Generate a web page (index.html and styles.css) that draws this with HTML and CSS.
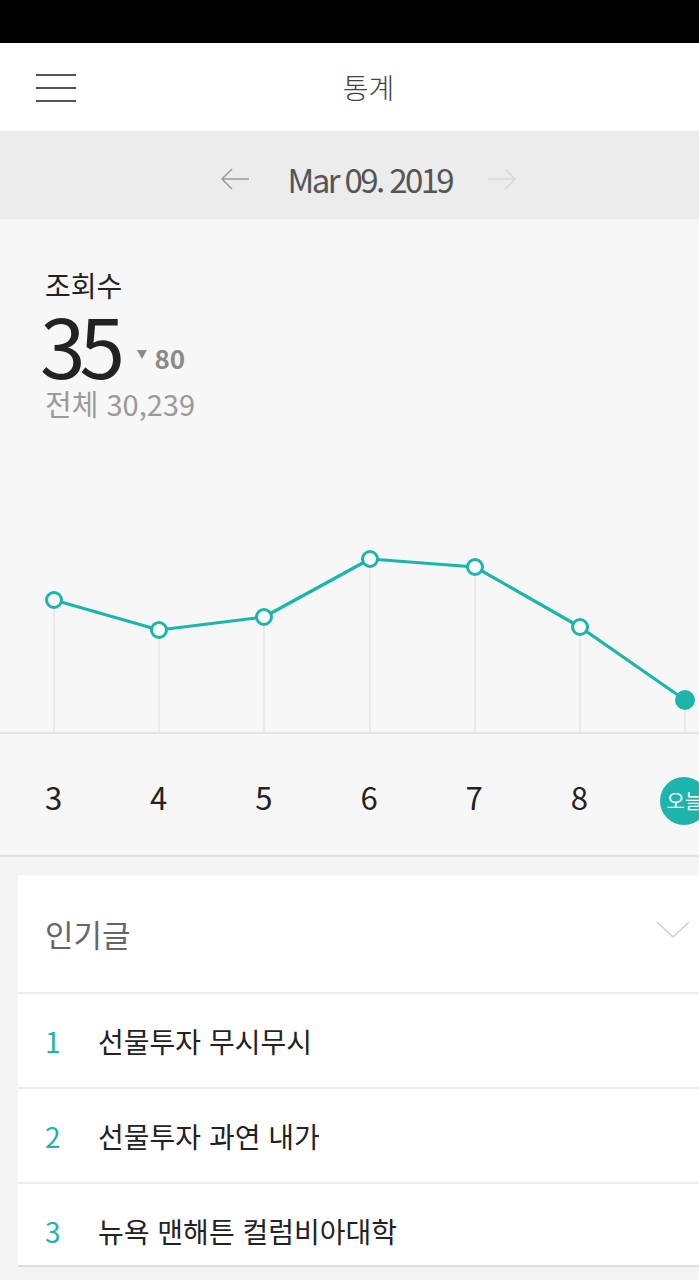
FILE: index.html
```html
<!DOCTYPE html>
<html lang="ko">
<head>
    <meta charset="UTF-8">
    <meta name="viewport" content="width=device-width, initial-scale=1.0">
    <title>통계</title>
    <link rel="stylesheet" href="styles.css">
</head>
<body>
    <div class="status-bar"></div>

    <!-- 상단 헤더 -->
    <header class="top-bar">
        <button class="menu-btn" aria-label="menu">
            <span></span><span></span><span></span>
        </button>
        <h1 class="title">통계</h1>
    </header>

    <!-- 날짜 선택 -->
    <div class="date-bar">
        <svg class="arrow" width="30" height="24" viewBox="0 0 30 24">
            <path d="M29 12H2M12 2L2 12L12 22" fill="none" stroke="#9a9a9a" stroke-width="1.5"/>
        </svg>
        <span class="date">Mar 09. 2019</span>
        <svg class="arrow" width="30" height="24" viewBox="0 0 30 24">
            <path d="M1 12H28M18 2L28 12L18 22" fill="none" stroke="#d6d6d6" stroke-width="1.5"/>
        </svg>
    </div>

    <!-- 조회수 -->
    <section class="stats">
        <div class="stat-label">조회수</div>
        <div class="stat-main">
            <span class="stat-value">35</span>
            <span class="stat-diff"><i class="tri"></i>80</span>
        </div>
        <div class="stat-total">전체 30,239</div>

        <svg class="chart" width="737" height="315" viewBox="0 0 737 315">
            <line x1="0" y1="313" x2="737" y2="313" stroke="#e3e3e3" stroke-width="2"/>
            <g stroke="#e6e6e6" stroke-width="1.5">
                <line x1="54" y1="180" x2="54" y2="313"/>
                <line x1="159" y1="210" x2="159" y2="313"/>
                <line x1="264" y1="197" x2="264" y2="313"/>
                <line x1="370" y1="139" x2="370" y2="313"/>
                <line x1="475" y1="147" x2="475" y2="313"/>
                <line x1="580" y1="207" x2="580" y2="313"/>
                <line x1="685" y1="280" x2="685" y2="313"/>
            </g>
            <polyline points="54,180 159,210 264,197 370,139 475,147 580,207 685,280"
                      fill="none" stroke="#1db4ac" stroke-width="3.2" stroke-linejoin="round"/>
            <g fill="#fff" stroke="#1db4ac" stroke-width="3">
                <circle cx="54" cy="180" r="7.5"/>
                <circle cx="159" cy="210" r="7.5"/>
                <circle cx="264" cy="197" r="7.5"/>
                <circle cx="370" cy="139" r="7.5"/>
                <circle cx="475" cy="147" r="7.5"/>
                <circle cx="580" cy="207" r="7.5"/>
            </g>
            <circle cx="685" cy="280" r="10" fill="#1db4ac"/>
        </svg>

        <div class="days">
            <span>3</span>
            <span>4</span>
            <span>5</span>
            <span>6</span>
            <span>7</span>
            <span>8</span>
            <span><b class="today">오늘</b></span>
        </div>
    </section>

    <!-- 인기글 -->
    <section class="popular">
        <div class="card">
            <div class="card-head">
                <span>인기글</span>
                <svg width="34" height="18" viewBox="0 0 34 18">
                    <path d="M1 1L17 16L33 1" fill="none" stroke="#cfcfcf" stroke-width="1.5"/>
                </svg>
            </div>
            <ul class="post-list">
                <li><span class="rank">1</span>선물투자 무시무시</li>
                <li><span class="rank">2</span>선물투자 과연 내가</li>
                <li class="last"><span class="rank">3</span>뉴욕 맨해튼 컬럼비아대학</li>
            </ul>
        </div>
    </section>
</body>
</html>
```

FILE: styles.css
```css
html {
    overflow: hidden;
}
body {
    margin: 0;
    width: 737px;
    font-family: "Noto Sans CJK KR", "Noto Sans", sans-serif;
    background-color: #f4f4f4;
    color: #222;
}
.status-bar {
    height: 43px;
    background-color: #000;
}
.top-bar {
    position: relative;
    height: 88px;
    background-color: #fff;
    display: flex;
    align-items: center;
    justify-content: center;
}
.menu-btn {
    position: absolute;
    left: 36px;
    top: 31px;
    width: 40px;
    height: 28px;
    padding: 0;
    border: none;
    background: none;
    display: flex;
    flex-direction: column;
    justify-content: space-between;
}
.menu-btn span {
    display: block;
    height: 2px;
    background-color: #555;
}
.title {
    margin: 0;
    font-size: 28px;
    font-weight: 300;
    color: #444;
}
.date-bar {
    height: 88px;
    box-sizing: border-box;
    padding-top: 8px;
    background-color: #ececec;
    display: flex;
    align-items: center;
    justify-content: center;
    gap: 38px;
}
.date {
    font-size: 33px;
    color: #555;
    letter-spacing: -2.6px;
    margin-right: -2.6px;
}
.stats {
    background-color: #f7f7f7;
    padding-top: 49px;
    border-bottom: 2px solid #dedede;
}
.stat-label {
    padding-left: 45px;
    font-size: 28px;
    line-height: 34px;
    color: #222;
}
.stat-main {
    padding-left: 40px;
    height: 84px;
    line-height: 84px;
}
.stat-value {
    font-size: 82px;
    font-weight: 400;
    letter-spacing: -6px;
    color: #222;
}
.stat-diff {
    margin-left: 13px;
    font-size: 26px;
    font-weight: 700;
    color: #8a8a8a;
    vertical-align: 10px;
}
.tri {
    display: inline-block;
    width: 0;
    height: 0;
    border-left: 5px solid transparent;
    border-right: 5px solid transparent;
    border-top: 9px solid #8a8a8a;
    margin-right: 8px;
    vertical-align: 10px;
}
.stat-total {
    padding-left: 45px;
    font-size: 29px;
    line-height: 34px;
    color: #9a9a9a;
}
.chart {
    display: block;
}
.days {
    display: grid;
    grid-template-columns: repeat(7, 1fr);
    height: 120px;
    padding: 2px 0 0 1px;
    box-sizing: border-box;
    align-items: center;
}
.days span {
    display: flex;
    justify-content: center;
    align-items: center;
    font-size: 31px;
    color: #222;
}
.today {
    display: block;
    width: 48px;
    height: 48px;
    margin-top: 10px;
    line-height: 48px;
    border-radius: 50%;
    background-color: #1db4ac;
    color: #fff;
    font-size: 20px;
    font-weight: 400;
    text-indent: 6px;
    white-space: nowrap;
    overflow: hidden;
}
.popular {
    padding: 18px 0 0 18px;
}
.card {
    background-color: #fff;
}
.card-head {
    height: 117px;
    display: flex;
    align-items: center;
    justify-content: space-between;
    padding: 0 47px 0 27px;
    font-size: 31px;
    color: #666;
}
.card-head svg {
    margin-top: -8px;
}
.post-list {
    list-style: none;
    margin: 0;
    padding: 0;
}
.post-list li {
    height: 93px;
    border-top: 2px solid #eeeeee;
    display: flex;
    align-items: center;
    padding-left: 27px;
    font-size: 28px;
    color: #222;
}
.post-list li.last {
    height: 69px;
    padding-top: 12px;
    border-bottom: 2px solid #dddddd;
}
.rank {
    width: 53px;
    color: #1db4ac;
}
```
